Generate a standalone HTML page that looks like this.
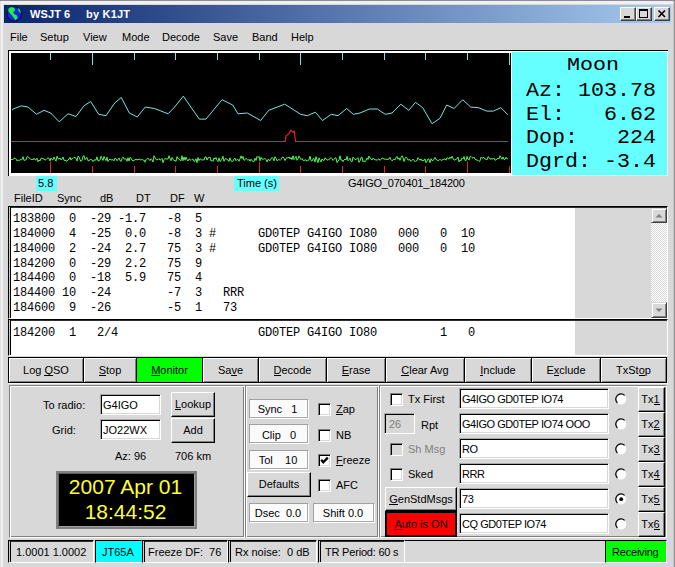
<!DOCTYPE html>
<html><head><meta charset="utf-8">
<style>
*{box-sizing:border-box}
html,body{margin:0;padding:0}
body{width:675px;height:567px;overflow:hidden;background:#d8d8d8;position:relative;font-family:"Liberation Sans",sans-serif;font-size:11px;color:#000}
.a{position:absolute}
.t{position:absolute;font:11px/13px "Liberation Sans",sans-serif;white-space:pre}
.mono{position:absolute;font:12px/15px "Liberation Mono",monospace;letter-spacing:-0.2px;white-space:pre}
.btn{position:absolute;background:#d8d8d8;border:1px solid #000;box-shadow:inset 1px 1px #fff,inset -1px -1px #808080;text-align:center;font:11px/13px "Liberation Sans",sans-serif;white-space:pre}
.rbtn{position:absolute;background:#d8d8d8;border:1px solid;border-color:#fff #000 #000 #fff;box-shadow:inset -1px -1px #808080;text-align:center;font:11px/13px "Liberation Sans",sans-serif;white-space:pre}
.ent{position:absolute;background:#fff;border:1px solid;border-color:#a8a8a8 #fff #fff #a8a8a8;box-shadow:inset 1px 1px #000,inset -1px -1px #d8d8d8;font:11px/13px "Liberation Sans",sans-serif;white-space:pre;overflow:hidden}
.grp{position:absolute;border:1px solid;border-color:#808080 #fff #fff #808080;box-shadow:inset 1px 1px #fff,inset -1px -1px #808080}
.lbl{position:absolute;background:#fafafa;border:1px solid;border-color:#a0a0a0 #fff #fff #a0a0a0;box-shadow:inset -1px -1px #a8a8a8;text-align:center;font:11px/13px "Liberation Sans",sans-serif;white-space:pre}
.chk{position:absolute;width:13px;height:13px;background:#fff;border:1px solid;border-color:#808080 #fff #fff #808080;box-shadow:inset 1px 1px #000,inset -1px -1px #d8d8d8}
.sb{position:absolute;top:540px;height:23px;border:1px solid;border-color:#000 #fff #fff #000;box-shadow:inset 1px 0 #c8c8c8,inset 2px 0 #000,inset 0 1px #303030;font:11px/13px "Liberation Sans",sans-serif;white-space:pre}
u{text-decoration:none;border-bottom:1px solid #000;display:inline-block;line-height:10px}
</style></head><body>
<!-- window frame -->
<div class="a" style="left:0;top:1px;width:675px;height:3px;background:#f0f0f0"></div>
<div class="a" style="left:0;top:0;width:675px;height:1px;background:#8c8c98"></div>
<div class="a" style="left:0;top:1px;width:3px;height:566px;background:#f0f0f0"></div>
<div class="a" style="left:0;top:1px;width:1px;height:566px;background:#e0e0e0"></div>
<div class="a" style="left:673px;top:1px;width:1px;height:566px;background:#c4c4c4"></div>
<div class="a" style="left:674px;top:0;width:1px;height:567px;background:#949494"></div>
<!-- title bar -->
<div class="a" style="left:4px;top:5px;width:667px;height:18px;background:linear-gradient(to right,#0a246a,#a6caf0)"></div>
<svg class="a" style="left:6px;top:6px" width="17" height="17" viewBox="0 0 17 17">
<circle cx="8.2" cy="7.9" r="7.2" fill="#1828d8" stroke="#000030" stroke-width="0.8"/>
<path d="M2.3 2.8 L5 1 L7.5 1.4 L9 3 L8.6 5 L7.2 6 L8 8 L11 9.4 L11.6 12 L9.6 14.2 L8 12.2 L6 9.6 L4 7.2 L2.4 5.2 Z" fill="#22ee44"/>
<path d="M12 2 L14 3.8 L15 7 L13.6 6.2 L12.2 4 Z" fill="#22ee44"/>
</svg>
<div class="t" style="left:30px;top:8px;color:#fff;font-weight:bold;letter-spacing:0.1px">WSJT 6</div>
<div class="t" style="left:86px;top:8px;color:#fff;font-weight:bold;letter-spacing:0.2px">by K1JT</div>
<!-- window buttons -->
<div class="rbtn" style="left:620px;top:7px;width:16px;height:14px;border-color:#fff #404040 #404040 #fff"></div>
<div class="a" style="left:624px;top:16px;width:6px;height:2px;background:#000"></div>
<div class="rbtn" style="left:636px;top:7px;width:16px;height:14px;border-color:#fff #404040 #404040 #fff"></div>
<div class="a" style="left:639px;top:9px;width:9px;height:9px;border:1px solid #000;border-top-width:2px"></div>
<div class="rbtn" style="left:654px;top:7px;width:16px;height:14px;border-color:#fff #404040 #404040 #fff"></div>
<svg class="a" style="left:654px;top:7px" width="16" height="14"><path d="M4.5 3.5 L11 10 M11 3.5 L4.5 10" stroke="#000" stroke-width="1.6"/></svg>
<!-- menu -->
<div class="t" style="left:10px;top:31px">File</div>
<div class="t" style="left:40px;top:31px">Setup</div>
<div class="t" style="left:83px;top:31px">View</div>
<div class="t" style="left:122px;top:31px">Mode</div>
<div class="t" style="left:162px;top:31px">Decode</div>
<div class="t" style="left:213px;top:31px">Save</div>
<div class="t" style="left:252px;top:31px">Band</div>
<div class="t" style="left:291px;top:31px">Help</div>
<!-- graph frame -->
<div class="a" style="left:8px;top:50px;width:660px;height:126px;background:#fff;border-top:1px solid #000;border-left:1px solid #000"></div>
<div class="a" style="left:11px;top:53px;width:500px;height:120px;background:#000"></div>
<div class="a" style="left:512px;top:52px;width:155px;height:123px;background:#66ffff"></div>
<svg style="position:absolute;left:0;top:0" width="675" height="200" shape-rendering="auto">
<line x1="50.5" y1="53" x2="50.5" y2="60" stroke="#78e4e4"/><line x1="50.5" y1="161.5" x2="50.5" y2="173" stroke="#e02424"/><line x1="92.5" y1="53" x2="92.5" y2="65" stroke="#78e4e4"/><line x1="92.5" y1="166" x2="92.5" y2="173" stroke="#e02424"/><line x1="134.5" y1="53" x2="134.5" y2="60" stroke="#78e4e4"/><line x1="134.5" y1="166" x2="134.5" y2="173" stroke="#e02424"/><line x1="175.5" y1="53" x2="175.5" y2="60" stroke="#78e4e4"/><line x1="175.5" y1="166" x2="175.5" y2="173" stroke="#e02424"/><line x1="217.5" y1="53" x2="217.5" y2="60" stroke="#78e4e4"/><line x1="217.5" y1="166" x2="217.5" y2="173" stroke="#e02424"/><line x1="259.5" y1="53" x2="259.5" y2="60" stroke="#78e4e4"/><line x1="259.5" y1="161.5" x2="259.5" y2="173" stroke="#e02424"/><line x1="300.5" y1="53" x2="300.5" y2="65" stroke="#78e4e4"/><line x1="300.5" y1="166" x2="300.5" y2="173" stroke="#e02424"/><line x1="342.5" y1="53" x2="342.5" y2="60" stroke="#78e4e4"/><line x1="342.5" y1="166" x2="342.5" y2="173" stroke="#e02424"/><line x1="384.5" y1="53" x2="384.5" y2="60" stroke="#78e4e4"/><line x1="384.5" y1="166" x2="384.5" y2="173" stroke="#e02424"/><line x1="425.5" y1="53" x2="425.5" y2="60" stroke="#78e4e4"/><line x1="425.5" y1="166" x2="425.5" y2="173" stroke="#e02424"/><line x1="467.5" y1="53" x2="467.5" y2="60" stroke="#78e4e4"/><line x1="467.5" y1="161.5" x2="467.5" y2="173" stroke="#e02424"/><line x1="509.5" y1="53" x2="509.5" y2="65" stroke="#78e4e4"/><line x1="509.5" y1="166" x2="509.5" y2="173" stroke="#e02424"/>
<polyline points="12.0,110.0 13.3,109.0 21.3,105.8 28.0,107.0 36.5,114.3 44.0,110.3 50.7,113.0 59.2,121.8 68.0,113.8 76.0,116.5 84.0,105.8 90.7,101.5 98.7,114.3 106.0,115.7 114.7,103.0 121.3,97.5 129.3,113.0 137.3,117.0 145.3,107.0 154.7,108.5 168.0,113.8 174.0,107.7 183.3,96.2 199.3,119.1 206.0,119.1 222.0,99.7 232.7,105.0 238.0,113.8 247.3,113.0 260.7,120.5 268.7,110.3 284.7,104.2 300.7,114.3 307.3,115.7 315.3,112.2 322.5,120.5 331.3,114.3 338.0,115.7 346.7,108.5 353.3,114.3 360.0,113.0 369.3,109.0 377.3,109.0 385.3,114.3 392.0,113.0 400.8,104.2 408.8,110.3 415.5,102.3 422.7,107.7 432.0,123.7 440.0,118.3 446.7,105.0 454.1,108.5 462.7,99.7 470.7,107.1 478.7,107.7 486.7,111.1 493.3,111.1 500.8,107.7 508.0,114.9" fill="none" stroke="#78e4e4" stroke-width="1"/>
<polyline points="11.0,141.5 285.2,141.5 286.0,136.0 287.0,135.1 289.0,133.5 290.8,130.3 292.6,131.9 294.2,131.1 295.6,141.5 508.0,141.5" fill="none" stroke="#e02424" stroke-width="1.2"/>
<polyline points="11.0,158.8 12.0,160.0 13.0,158.9 14.0,158.7 15.0,157.8 16.0,158.9 17.0,160.9 18.0,159.8 19.0,160.8 20.0,159.6 21.0,159.8 22.0,159.5 23.0,156.7 24.0,160.5 25.0,160.0 26.0,159.9 27.0,156.7 28.0,156.6 29.0,157.9 30.0,158.5 31.0,159.7 32.0,159.1 33.0,160.0 34.0,158.2 35.0,159.7 36.0,159.8 37.0,158.2 38.0,161.8 39.0,160.0 40.0,161.0 41.0,158.3 42.0,158.1 43.0,158.7 44.0,159.0 45.0,160.1 46.0,159.6 47.0,158.5 48.0,157.8 49.0,158.4 50.0,161.0 51.0,158.0 52.0,159.6 53.0,159.8 54.0,157.0 55.0,159.3 56.0,161.2 57.0,156.2 58.0,158.7 59.0,159.0 60.0,158.0 61.0,159.9 62.0,159.1 63.0,157.0 64.0,160.4 65.0,160.2 66.0,160.6 67.0,161.4 68.0,159.7 69.0,159.4 70.0,157.3 71.0,160.1 72.0,158.3 73.0,158.5 74.0,157.3 75.0,157.7 76.0,158.4 77.0,161.1 78.0,156.2 79.0,157.0 80.0,159.6 81.0,161.4 82.0,160.1 83.0,156.4 84.0,155.7 85.0,159.7 86.0,158.1 87.0,157.5 88.0,160.7 89.0,160.9 90.0,159.4 91.0,159.6 92.0,159.9 93.0,161.6 94.0,160.1 95.0,160.0 96.0,160.0 97.0,156.8 98.0,161.1 99.0,160.6 100.0,160.0 101.0,156.2 102.0,158.2 103.0,160.5 104.0,156.5 105.0,158.9 106.0,160.7 107.0,157.2 108.0,161.6 109.0,160.0 110.0,159.0 111.0,159.7 112.0,160.2 113.0,159.4 114.0,160.9 115.0,158.2 116.0,158.6 117.0,160.8 118.0,159.2 119.0,157.9 120.0,160.6 121.0,161.4 122.0,158.5 123.0,157.1 124.0,159.0 125.0,159.0 126.0,158.8 127.0,161.3 128.0,157.7 129.0,161.1 130.0,157.3 131.0,158.0 132.0,160.1 133.0,160.9 134.0,160.5 135.0,159.7 136.0,159.4 137.0,159.4 138.0,160.1 139.0,158.9 140.0,159.6 141.0,160.1 142.0,159.2 143.0,160.3 144.0,160.0 145.0,162.2 146.0,159.7 147.0,158.6 148.0,158.6 149.0,159.2 150.0,160.6 151.0,158.7 152.0,159.8 153.0,162.0 154.0,155.7 155.0,157.5 156.0,159.6 157.0,159.8 158.0,159.6 159.0,158.6 160.0,160.2 161.0,159.6 162.0,158.4 163.0,162.7 164.0,159.7 165.0,158.4 166.0,159.1 167.0,158.9 168.0,159.1 169.0,155.7 170.0,158.5 171.0,160.7 172.0,157.4 173.0,159.1 174.0,160.6 175.0,160.5 176.0,161.4 177.0,156.6 178.0,158.7 179.0,158.7 180.0,160.1 181.0,160.8 182.0,155.7 183.0,160.8 184.0,157.0 185.0,160.2 186.0,157.0 187.0,159.5 188.0,161.0 189.0,159.0 190.0,159.5 191.0,160.4 192.0,159.4 193.0,159.1 194.0,161.5 195.0,160.8 196.0,158.8 197.0,162.7 198.0,157.5 199.0,160.6 200.0,158.8 201.0,159.4 202.0,160.3 203.0,159.5 204.0,160.2 205.0,156.9 206.0,156.9 207.0,160.1 208.0,157.8 209.0,157.7 210.0,157.0 211.0,161.1 212.0,160.3 213.0,161.4 214.0,157.8 215.0,159.2 216.0,157.5 217.0,160.3 218.0,161.6 219.0,157.9 220.0,161.5 221.0,160.7 222.0,158.9 223.0,156.2 224.0,161.3 225.0,159.1 226.0,158.3 227.0,159.8 228.0,159.8 229.0,161.4 230.0,157.7 231.0,160.9 232.0,161.4 233.0,161.4 234.0,158.9 235.0,158.1 236.0,160.7 237.0,159.4 238.0,159.4 239.0,161.3 240.0,158.8 241.0,155.8 242.0,158.6 243.0,156.4 244.0,160.4 245.0,159.7 246.0,158.3 247.0,159.2 248.0,160.4 249.0,159.3 250.0,161.2 251.0,159.1 252.0,160.8 253.0,161.4 254.0,161.6 255.0,158.2 256.0,160.5 257.0,156.4 258.0,157.6 259.0,156.3 260.0,160.8 261.0,157.4 262.0,159.2 263.0,158.9 264.0,159.2 265.0,158.3 266.0,159.6 267.0,161.9 268.0,159.3 269.0,160.0 270.0,160.7 271.0,158.9 272.0,157.3 273.0,158.4 274.0,160.8 275.0,156.7 276.0,158.3 277.0,160.7 278.0,160.4 279.0,159.2 280.0,160.4 281.0,159.4 282.0,157.4 283.0,156.9 284.0,158.2 285.0,160.6 286.0,158.4 287.0,157.8 288.0,158.0 289.0,156.9 290.0,159.0 291.0,157.4 292.0,159.7 293.0,155.7 294.0,159.7 295.0,158.2 296.0,156.3 297.0,160.3 298.0,158.8 299.0,155.9 300.0,157.9 301.0,159.6 302.0,158.5 303.0,160.4 304.0,160.3 305.0,160.2 306.0,159.7 307.0,161.2 308.0,160.2 309.0,159.9 310.0,156.1 311.0,160.5 312.0,161.2 313.0,158.8 314.0,158.5 315.0,162.1 316.0,156.6 317.0,159.9 318.0,162.7 319.0,157.8 320.0,160.2 321.0,162.0 322.0,159.0 323.0,160.0 324.0,160.6 325.0,157.8 326.0,159.1 327.0,159.6 328.0,160.4 329.0,159.1 330.0,158.9 331.0,157.7 332.0,158.7 333.0,160.5 334.0,159.4 335.0,157.9 336.0,157.9 337.0,162.7 338.0,160.9 339.0,160.2 340.0,155.7 341.0,160.1 342.0,159.9 343.0,161.7 344.0,159.8 345.0,159.1 346.0,160.0 347.0,156.3 348.0,160.7 349.0,159.7 350.0,158.1 351.0,161.2 352.0,161.9 353.0,157.1 354.0,158.2 355.0,159.6 356.0,159.5 357.0,158.6 358.0,157.7 359.0,162.4 360.0,160.8 361.0,157.4 362.0,157.2 363.0,161.8 364.0,160.7 365.0,161.9 366.0,160.4 367.0,157.9 368.0,159.6 369.0,156.0 370.0,158.1 371.0,159.1 372.0,160.0 373.0,158.1 374.0,159.0 375.0,159.9 376.0,159.8 377.0,160.2 378.0,159.5 379.0,158.7 380.0,160.4 381.0,159.3 382.0,158.0 383.0,158.3 384.0,159.2 385.0,159.0 386.0,159.4 387.0,159.2 388.0,159.5 389.0,159.0 390.0,157.3 391.0,159.8 392.0,160.8 393.0,159.9 394.0,158.9 395.0,159.9 396.0,157.8 397.0,156.4 398.0,159.3 399.0,157.8 400.0,160.3 401.0,157.6 402.0,155.7 403.0,157.6 404.0,161.6 405.0,158.6 406.0,157.1 407.0,158.1 408.0,160.0 409.0,159.9 410.0,159.5 411.0,161.4 412.0,160.3 413.0,159.2 414.0,160.1 415.0,161.7 416.0,160.7 417.0,160.7 418.0,157.6 419.0,159.0 420.0,160.3 421.0,158.8 422.0,160.8 423.0,160.1 424.0,160.6 425.0,158.9 426.0,162.7 427.0,161.1 428.0,158.9 429.0,159.3 430.0,162.7 431.0,158.7 432.0,160.5 433.0,160.7 434.0,159.2 435.0,157.4 436.0,159.5 437.0,159.7 438.0,160.9 439.0,160.4 440.0,159.2 441.0,160.5 442.0,160.0 443.0,159.5 444.0,159.3 445.0,158.8 446.0,160.2 447.0,157.6 448.0,158.3 449.0,159.2 450.0,157.0 451.0,158.5 452.0,156.2 453.0,158.2 454.0,160.1 455.0,160.0 456.0,159.1 457.0,158.9 458.0,157.1 459.0,161.9 460.0,160.0 461.0,160.8 462.0,157.9 463.0,158.9 464.0,156.5 465.0,160.4 466.0,160.6 467.0,156.4 468.0,159.1 469.0,160.1 470.0,156.6 471.0,156.5 472.0,157.6 473.0,158.3 474.0,157.1 475.0,159.2 476.0,159.6 477.0,160.2 478.0,160.3 479.0,161.5 480.0,160.9 481.0,157.2 482.0,158.4 483.0,157.6 484.0,157.6 485.0,159.1 486.0,159.2 487.0,159.9 488.0,156.8 489.0,157.3 490.0,159.2 491.0,158.9 492.0,158.7 493.0,159.1 494.0,158.1 495.0,160.3 496.0,159.7 497.0,159.1 498.0,158.2 499.0,158.9 500.0,155.7 501.0,157.7 502.0,159.3 503.0,156.9 504.0,159.5 505.0,159.4 506.0,157.1 507.0,158.8 508.0,158.7" fill="none" stroke="#4cf84c" stroke-width="1"/>
</svg>
<div class="a" style="left:526px;top:78.8px;font:21.67px/23.8px 'Liberation Mono',monospace;white-space:pre;transform:scaleY(0.92);transform-origin:0 17.7px">Az: 103.78</div>
<div class="a" style="left:526px;top:102.6px;font:21.67px/23.8px 'Liberation Mono',monospace;white-space:pre;transform:scaleY(0.92);transform-origin:0 17.7px">El:   6.62</div>
<div class="a" style="left:526px;top:126.4px;font:21.67px/23.8px 'Liberation Mono',monospace;white-space:pre;transform:scaleY(0.92);transform-origin:0 17.7px">Dop:   224</div>
<div class="a" style="left:526px;top:150.2px;font:21.67px/23.8px 'Liberation Mono',monospace;white-space:pre;transform:scaleY(0.92);transform-origin:0 17.7px">Dgrd: -3.4</div>
<div class="a" style="left:567px;top:55px;font:21.67px/23.8px 'Liberation Mono',monospace;white-space:pre;transform:scaleY(0.87);transform-origin:0 2.5px">Moon</div>
<!-- labels under graph -->
<div class="a" style="left:36px;top:176px;width:21px;height:15px;background:#66ffff"></div>
<div class="t" style="left:38px;top:177px">5.8</div>
<div class="a" style="left:234px;top:176px;width:45px;height:15px;background:#66ffff"></div>
<div class="t" style="left:237px;top:177px">Time (s)</div>
<div class="t" style="left:348px;top:177px;letter-spacing:-0.2px">G4IGO_070401_184200</div>
<!-- header -->
<div class="t" style="left:14px;top:192px">FileID</div>
<div class="t" style="left:57px;top:192px">Sync</div>
<div class="t" style="left:100px;top:192px">dB</div>
<div class="t" style="left:136px;top:192px">DT</div>
<div class="t" style="left:170px;top:192px">DF</div>
<div class="t" style="left:194px;top:192px">W</div>
<!-- text box 1 -->
<div class="a" style="left:8px;top:206px;width:660px;height:113px;background:#d8d8d8;border:1px solid;border-color:#000 #fff #fff #000;box-shadow:inset 1px 0 #c8c8c8,inset 2px 0 #000,inset 0 1px #303030,inset -1px -1px #d8d8d8"></div>
<div class="a" style="left:11px;top:208px;width:564px;height:110px;background:#fff"></div>
<div class="mono" style="left:13px;top:212px;line-height:14.85px">183800  0  -29 -1.7   -8  5
184000  4  -25  0.0   -8  3 #      GD0TEP G4IGO IO80   000   0  10
184000  2  -24  2.7   75  3 #      GD0TEP G4IGO IO80   000   0  10
184200  0  -29  2.2   75  9
184400  0  -18  5.9   75  4
184400 10  -24        -7  3   RRR
184600  9  -26        -5  1   73</div>
<!-- scrollbar -->
<div class="a" style="left:651px;top:208px;width:16px;height:110px;background-color:#fff;background-image:repeating-conic-gradient(#d8d8d8 0 25%,#fff 0 50%);background-size:2px 2px"></div>
<div class="rbtn" style="left:651px;top:208px;width:16px;height:15px;border-color:#d8d8d8 #404040 #404040 #d8d8d8;box-shadow:inset 1px 1px #fff,inset -1px -1px #808080"></div>
<svg class="a" style="left:651px;top:208px" width="16" height="15"><path d="M4.5 9.5 L11.5 9.5 L8 6 Z" fill="#808080"/></svg>
<div class="rbtn" style="left:651px;top:302px;width:16px;height:16px;border-color:#d8d8d8 #404040 #404040 #d8d8d8;box-shadow:inset 1px 1px #fff,inset -1px -1px #808080"></div>
<svg class="a" style="left:651px;top:302px" width="16" height="16"><path d="M4.5 6.5 L11.5 6.5 L8 10 Z" fill="#808080"/></svg>
<!-- text box 2 -->
<div class="a" style="left:8px;top:319px;width:660px;height:37px;background:#d8d8d8;border:1px solid;border-color:#000 #fff #fff #000;box-shadow:inset 1px 0 #c8c8c8,inset 2px 0 #000,inset 0 1px #303030,inset -1px -1px #d8d8d8"></div>
<div class="a" style="left:11px;top:321px;width:564px;height:34px;background:#fff"></div>
<div class="mono" style="left:13px;top:326px">184200  1   2/4                    GD0TEP G4IGO IO80         1   0</div>
<!-- button row -->
<div class="btn" style="left:8px;top:357px;width:76px;height:26px;padding-top:6px;">Log <u>Q</u>SO</div>
<div class="btn" style="left:84px;top:357px;width:53px;height:26px;padding-top:6px;border-left:0;"><u>S</u>top</div>
<div class="btn" style="left:137px;top:357px;width:66px;height:26px;padding-top:6px;border-left:0;background:#00ff00;box-shadow:none;"><u>M</u>onitor</div>
<div class="btn" style="left:203px;top:357px;width:56px;height:26px;padding-top:6px;border-left:0;">Sa<u>v</u>e</div>
<div class="btn" style="left:259px;top:357px;width:68px;height:26px;padding-top:6px;border-left:0;"><u>D</u>ecode</div>
<div class="btn" style="left:327px;top:357px;width:59px;height:26px;padding-top:6px;border-left:0;"><u>E</u>rase</div>
<div class="btn" style="left:386px;top:357px;width:79px;height:26px;padding-top:6px;border-left:0;"><u>C</u>lear Avg</div>
<div class="btn" style="left:465px;top:357px;width:67px;height:26px;padding-top:6px;border-left:0;"><u>I</u>nclude</div>
<div class="btn" style="left:532px;top:357px;width:69px;height:26px;padding-top:6px;border-left:0;">E<u>x</u>clude</div>
<div class="btn" style="left:601px;top:357px;width:66px;height:26px;padding-top:6px;border-left:0;">TxSt<u>o</u>p</div>
<div class="a" style="left:8px;top:383px;width:660px;height:1px;background:#f4f4f4"></div>
<!-- panels -->
<div class="grp" style="left:9px;top:385px;width:236px;height:153px"></div>
<div class="grp" style="left:245px;top:385px;width:134px;height:153px"></div>
<div class="grp" style="left:379px;top:385px;width:288px;height:153px"></div>
<!-- left panel -->
<div class="t" style="left:43px;top:399px">To radio:</div>
<div class="t" style="left:52px;top:424px">Grid:</div>
<div class="ent" style="left:100px;top:394px;width:61px;height:21px;padding:4px 0 0 2px">G4IGO</div>
<div class="ent" style="left:100px;top:419px;width:61px;height:21px;padding:4px 0 0 2px">JO22WX</div>
<div class="rbtn" style="left:171px;top:392px;width:44px;height:25px;padding-top:5px"><u>L</u>ookup</div>
<div class="rbtn" style="left:171px;top:418px;width:44px;height:25px;padding-top:5px">Add</div>
<div class="t" style="left:115px;top:450px">Az: 96</div>
<div class="t" style="left:175px;top:450px">706 km</div>
<div class="a" style="left:56px;top:471px;width:141px;height:58px;background:#000;border:2px solid #808080;box-shadow:inset 1px 1px #606060,inset -1px -1px #a0a0a0"></div>
<div class="a" style="left:55px;top:475px;width:141px;text-align:center;color:#ffff33;font:21px/24.5px 'Liberation Sans',sans-serif;white-space:pre">2007 Apr 01
18:44:52</div>
<!-- mid panel -->
<div class="lbl" style="left:249px;top:399px;width:60px;height:20px;padding-top:3px;text-indent:-3px">Sync   1</div>
<div class="lbl" style="left:249px;top:424px;width:60px;height:20px;padding-top:4px">Clip   0</div>
<div class="lbl" style="left:249px;top:450px;width:60px;height:20px;padding-top:3px;text-indent:-2px">Tol    10</div>
<div class="rbtn" style="left:247px;top:472px;width:64px;height:25px;padding-top:5px">Defaults</div>
<div class="lbl" style="left:249px;top:503px;width:60px;height:20px;padding-top:3px;text-indent:-2px">Dsec  0.0</div>
<div class="lbl" style="left:313px;top:503px;width:62px;height:20px;padding-top:3px;text-indent:-2px">Shift 0.0</div>
<div class="chk" style="left:318px;top:403px"></div>
<div class="chk" style="left:318px;top:429px"></div>
<div class="chk" style="left:318px;top:454px"></div>
<svg class="a" style="left:318px;top:454px" width="13" height="13"><path d="M3.2 5.8 L5.3 8.3 L9.8 3.6" stroke="#000" stroke-width="2.3" fill="none"/></svg>
<div class="chk" style="left:318px;top:479px"></div>
<div class="t" style="left:336px;top:403px"><u>Z</u>ap</div>
<div class="t" style="left:336px;top:429px">NB</div>
<div class="t" style="left:336px;top:454px"><u>F</u>reeze</div>
<div class="t" style="left:336px;top:479px">AFC</div>
<!-- right panel -->
<div class="chk" style="left:390px;top:393px"></div>
<div class="t" style="left:408px;top:393px">Tx First</div>
<div class="ent" style="left:384px;top:413px;width:31px;height:21px;padding:4px 0 0 4px;background:#d8d8d8;color:#808080">26</div>
<div class="t" style="left:421px;top:419px">Rpt</div>
<div class="chk" style="left:390px;top:443px;background:#d8d8d8"></div>
<div class="t" style="left:408px;top:443px;color:#808080">Sh Msg</div>
<div class="chk" style="left:390px;top:468px"></div>
<div class="t" style="left:408px;top:468px">Sked</div>
<div class="rbtn" style="left:385px;top:487px;width:72px;height:24px;padding-top:5px"><u>G</u>enStdMsgs</div>
<div class="a" style="left:385px;top:511px;width:72px;height:26px;background:#ff0000;border:2px solid #000;text-align:center;font:11px/13px 'Liberation Sans',sans-serif;padding-top:5px;white-space:pre"><u>A</u>uto is ON</div>
<div class="ent" style="left:459px;top:388px;width:150px;height:21px;padding:4px 0 0 2px;letter-spacing:-0.45px">G4IGO GD0TEP IO74</div>
<div class="ent" style="left:459px;top:413px;width:150px;height:21px;padding:4px 0 0 2px;letter-spacing:-0.45px">G4IGO GD0TEP IO74 OOO</div>
<div class="ent" style="left:459px;top:438px;width:150px;height:21px;padding:4px 0 0 2px;letter-spacing:-0.45px">RO</div>
<div class="ent" style="left:459px;top:463px;width:150px;height:21px;padding:4px 0 0 2px;letter-spacing:-0.45px">RRR</div>
<div class="ent" style="left:459px;top:488px;width:150px;height:21px;padding:4px 0 0 2px;letter-spacing:-0.45px">73</div>
<div class="ent" style="left:459px;top:513px;width:150px;height:21px;padding:4px 0 0 2px;letter-spacing:-0.45px">CQ GD0TEP IO74</div>
<svg class="a" style="left:615px;top:393px" width="12" height="12" viewBox="0 0 12 12">
<circle cx="6" cy="6.2" r="5.2" fill="#fff"/>
<path d="M2.4 10 A5 5 0 0 1 9.6 2.4" stroke="#000" stroke-width="1.3" fill="none"/>
</svg>
<svg class="a" style="left:615px;top:418px" width="12" height="12" viewBox="0 0 12 12">
<circle cx="6" cy="6.2" r="5.2" fill="#fff"/>
<path d="M2.4 10 A5 5 0 0 1 9.6 2.4" stroke="#000" stroke-width="1.3" fill="none"/>
</svg>
<svg class="a" style="left:615px;top:443px" width="12" height="12" viewBox="0 0 12 12">
<circle cx="6" cy="6.2" r="5.2" fill="#fff"/>
<path d="M2.4 10 A5 5 0 0 1 9.6 2.4" stroke="#000" stroke-width="1.3" fill="none"/>
</svg>
<svg class="a" style="left:615px;top:468px" width="12" height="12" viewBox="0 0 12 12">
<circle cx="6" cy="6.2" r="5.2" fill="#fff"/>
<path d="M2.4 10 A5 5 0 0 1 9.6 2.4" stroke="#000" stroke-width="1.3" fill="none"/>
</svg>
<svg class="a" style="left:615px;top:493px" width="12" height="12" viewBox="0 0 12 12">
<circle cx="6" cy="6.2" r="5.2" fill="#fff"/>
<path d="M2.4 10 A5 5 0 0 1 9.6 2.4" stroke="#000" stroke-width="1.3" fill="none"/><circle cx="6.2" cy="6.2" r="1.9" fill="#000"/>
</svg>
<svg class="a" style="left:615px;top:518px" width="12" height="12" viewBox="0 0 12 12">
<circle cx="6" cy="6.2" r="5.2" fill="#fff"/>
<path d="M2.4 10 A5 5 0 0 1 9.6 2.4" stroke="#000" stroke-width="1.3" fill="none"/>
</svg>
<div class="rbtn" style="left:638px;top:387px;width:27px;height:25px;padding-top:5px;padding-right:2px">Tx<u>1</u></div>
<div class="rbtn" style="left:638px;top:412px;width:27px;height:25px;padding-top:5px;padding-right:2px">Tx<u>2</u></div>
<div class="rbtn" style="left:638px;top:437px;width:27px;height:25px;padding-top:5px;padding-right:2px">Tx<u>3</u></div>
<div class="rbtn" style="left:638px;top:462px;width:27px;height:25px;padding-top:5px;padding-right:2px">Tx<u>4</u></div>
<div class="rbtn" style="left:638px;top:487px;width:27px;height:25px;padding-top:5px;padding-right:2px">Tx<u>5</u></div>
<div class="rbtn" style="left:638px;top:512px;width:27px;height:25px;padding-top:5px;padding-right:2px">Tx<u>6</u></div>
<!-- status bar -->
<div class="sb" style="left:8px;width:86px;padding:5px 0 0 7px">1.0001 1.0002</div>
<div class="sb" style="left:95px;width:47px;background:#00ffff;box-shadow:none;padding:5px 0 0 6px;border-right-color:#00ffff">JT65A</div>
<div class="sb" style="left:142px;width:86px;padding:5px 0 0 5px">Freeze DF:  76</div>
<div class="sb" style="left:228px;width:89px;padding:5px 0 0 6px">Rx noise:  0 dB</div>
<div class="sb" style="left:318px;width:87px;padding:5px 0 0 6px;letter-spacing:-0.2px">TR Period: 60 s</div>
<div class="a" style="left:405px;top:540px;width:200px;height:1px;background:#000"></div>
<div class="a" style="left:405px;top:562px;width:200px;height:1px;background:#fff"></div>
<div class="sb" style="left:605px;width:62px;background:#00ff00;box-shadow:none;padding:5px 0 0 6px;letter-spacing:-0.2px">Receiving</div>
</body></html>
